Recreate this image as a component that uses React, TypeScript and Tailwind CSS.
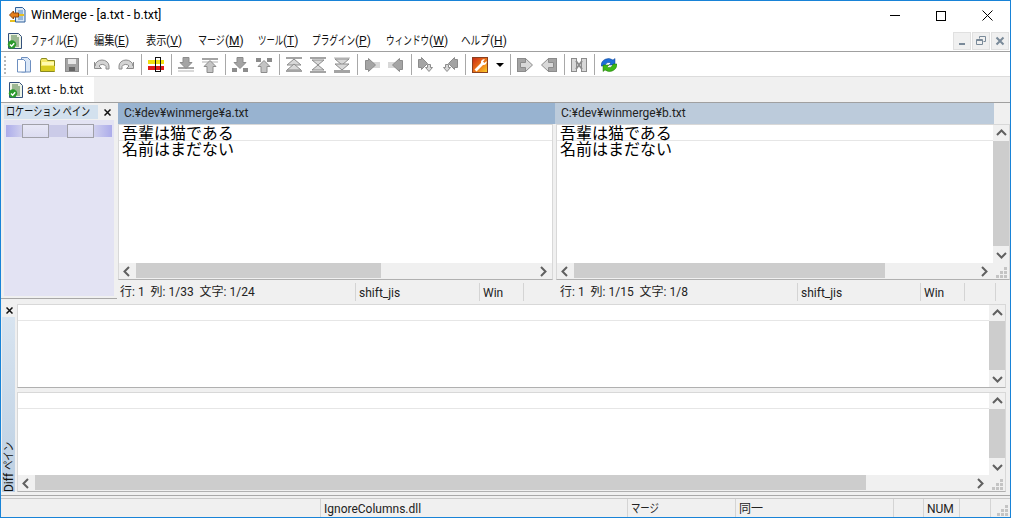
import type { ReactNode } from "react";

const UI = "font-['Roboto','Noto_Sans_CJK_JP',sans-serif]";

function Ico({ children, w = 16, h = 16 }: { children: ReactNode; w?: number; h?: number }) {
  return (
    <svg width={w} height={h} viewBox={`0 0 ${w} ${h}`} className="block shrink-0">
      {children}
    </svg>
  );
}

const G = "#a4a4a4";
const D = "#8c8c8c";
const L = "#d8d8d8";

function DocCheck() {
  return (
    <Ico>
      <path d="M1.500 .5h10l3 3v12h-13z" fill="#eef4e6" stroke="#34507c" />
      <path d="M4 3h6M4 5h8M4 7h8M8 9h4M9 11h3M9 13h3" stroke="#4a7a40" />
      <circle cx="5" cy="11.500" r="4.200" fill="#2a9a2c" />
      <path d="M3 11.500l1.600 1.700 2.600-3" fill="none" stroke="#fff" strokeWidth="1.400" />
    </Ico>
  );
}

function AppIcon() {
  return (
    <Ico w={17} h={17}>
      <path d="M6.500 .5h7l2.500 2.500v12h-9.500z" fill="#dce9f6" stroke="#2f5f9a" />
      <path d="M9 4h5M9 6h5M9 10h5M9 12h5" stroke="#4f86c0" />
      <rect x="8" y="7" width="7" height="2" fill="#e8c020" />
      <path d="M.5 8l4-4v2h5v4h-5v2z" fill="#e8801c" stroke="#8f4a10" />
      <rect x="1" y="13" width="5" height="2" fill="#e8c020" />
    </Ico>
  );
}

// toolbar glyphs, all disabled grey except a few
const tools: Record<string, ReactNode> = {
  new: (
    <>
      <path d="M5.500 .5h6l3 3v11.500h-9z" fill="#dbe8f8" stroke="#6d8fc0" />
      <path d="M1.500 2.500h6l2 2v10.500h-8z" fill="#fff" stroke="#6d8fc0" />
    </>
  ),
  open: (
    <>
      <path d="M.5 3.500l1-2h5l1 2h7v11h-14z" fill="#f5e96a" stroke="#8a8a20" />
      <rect x="2" y="5" width="12" height="3" fill="#fffbb0" />
      <rect x="1" y="9" width="14" height="5" fill="#d8cc20" />
    </>
  ),
  save: (
    <>
      <rect x="1.500" y="1.500" width="13" height="13" fill={G} stroke={D} />
      <rect x="4" y="2" width="8" height="5" fill="#e8e8e8" />
      <rect x="5" y="10" width="6" height="4" fill="#666" />
    </>
  ),
  undo: <path d="M1 9a7 6 0 0 1 14 0v3h-3V9.500a4 3.500 0 0 0-7-.5l2.500 2.500H.5V5z" fill="#d4d4d4" stroke={D} />,
  redo: <path d="M15 9a7 6 0 0 0-14 0v3h3V9.500a4 3.500 0 0 1 7-.5l-2.500 2.500h7V5z" fill="#d4d4d4" stroke={D} />,
  bars: (
    <>
      <rect x="0" y="3" width="16" height="4" fill="#f0e010" />
      <rect x="0" y="9" width="16" height="4" fill="#e01818" />
      <rect x="7.500" y=".5" width="5" height="14" fill="none" stroke="#111" />
    </>
  ),
  next: (
    <>
      <rect x="0" y="10" width="16" height="2" fill={G} />
      <rect x="0" y="13" width="16" height="2" fill={L} />
      <path d="M5 .5h6v5h3l-6 6-6-6h3z" fill={G} stroke={D} />
    </>
  ),
  prev: (
    <>
      <rect x="0" y="1" width="16" height="2" fill={G} />
      <rect x="0" y="4" width="16" height="2" fill={L} />
      <path d="M5 15.500h6v-6h3l-6-6-6 6h3z" fill="#c4c4c4" stroke={D} />
    </>
  ),
  nextc: (
    <>
      <rect x="0" y="11" width="5" height="4" fill={D} />
      <rect x="11" y="11" width="5" height="4" fill={D} />
      <path d="M5 .5h6v5h3l-6 6-6-6h3z" fill={G} stroke={D} />
    </>
  ),
  prevc: (
    <>
      <rect x="0" y="1" width="5" height="4" fill={D} />
      <rect x="11" y="1" width="5" height="4" fill={D} />
      <path d="M5 15.500h6v-6h3l-6-6-6 6h3z" fill="#c4c4c4" stroke={D} />
    </>
  ),
  first: (
    <>
      <rect x="0" y="0" width="16" height="2" fill={G} />
      <path d="M8 2l7 6H1z" fill={L} stroke={D} />
      <path d="M8 7l7 6H1z" fill={L} stroke={D} />
      <rect x="0" y="13" width="16" height="2" fill={G} />
    </>
  ),
  cur: (
    <>
      <rect x="0" y="0" width="16" height="2" fill={G} />
      <path d="M2 3h12L8 8z" fill={L} stroke={D} />
      <path d="M2 13h12L8 8z" fill={L} stroke={D} />
      <rect x="0" y="14" width="16" height="2" fill={G} />
    </>
  ),
  last: (
    <>
      <rect x="0" y="0" width="16" height="2" fill={L} />
      <path d="M8 8l7-6H1z" fill={L} stroke={D} />
      <path d="M8 13l7-6H1z" fill={L} stroke={D} />
      <rect x="0" y="13" width="16" height="3" fill={G} />
    </>
  ),
  right: (
    <>
      <rect x="9" y="5" width="7" height="6" fill={L} />
      <path d="M1.500 3.500h3v-2l7 6.500-7 6.500v-2h-3z" fill={G} stroke={D} />
    </>
  ),
  left: (
    <>
      <rect x="0" y="5" width="7" height="6" fill={L} />
      <path d="M14.500 3.500h-3v-2l-7 6.500 7 6.500v-2h3z" fill={G} stroke={D} />
    </>
  ),
  rightd: (
    <>
      <path d="M.5 2.500h3v-2l6 6-6 6v-2h-3z" fill={G} stroke={D} />
      <path d="M9.500 7.500h3v3h2l-3.500 4-3.500-4h2z" fill={L} stroke={D} />
    </>
  ),
  leftd: (
    <>
      <path d="M15.500 2.500h-3v-2l-6 6 6 6v-2h3z" fill={G} stroke={D} />
      <path d="M3.500 7.500h3v3h2l-3.500 4-3.500-4h2z" fill={L} stroke={D} />
    </>
  ),
  wrench: (
    <>
      <defs>
        <linearGradient id="wr" x1="0" y1="0" x2="1" y2="1">
          <stop offset="0" stopColor="#c82818" />
          <stop offset="0.6" stopColor="#f08018" />
          <stop offset="1" stopColor="#f8d830" />
        </linearGradient>
      </defs>
      <rect x=".5" y=".5" width="15" height="15" fill="url(#wr)" stroke="#8a4020" />
      <path d="M2.500 12.500l6.500-6.500a3 3 0 0 1 4-3.500l-2 2 1.500 1.500 2-2a3 3 0 0 1-3.500 4l-6.500 6.500z" fill="#fff" />
    </>
  ),
  boxr: (
    <>
      <rect x=".5" y="1.500" width="8" height="13" fill={G} stroke={D} />
      <path d="M3.500 5.500h5v-4l7 6.500-7 6.500v-4h-5z" fill={L} stroke={D} />
    </>
  ),
  boxl: (
    <>
      <rect x="7.500" y="1.500" width="8" height="13" fill={G} stroke={D} />
      <path d="M12.500 5.500h-5v-4l-7 6.500 7 6.500v-4h5z" fill={L} stroke={D} />
    </>
  ),
  merge: (
    <>
      <rect x=".5" y="1.500" width="5" height="13" fill={L} stroke={D} />
      <rect x="10.500" y="1.500" width="5" height="13" fill={L} stroke={D} />
      <path d="M5 4l3 4-3 4M11 4L8 8l3 4" fill="none" stroke={D} strokeWidth="2" />
    </>
  ),
  refresh: (
    <>
      <path d="M0 9a7.500 7.500 0 0 1 12-6l2-1.500V8H8l2-2a4 4 0 0 0-6 3z" fill="#1c6ed8" stroke="#0c3f90" strokeWidth=".5" />
      <path d="M16 7a7.500 7.500 0 0 1-12 6l-2 1.500V8h6l-2 2a4 4 0 0 0 6-3z" fill="#3cb818" stroke="#1c7008" strokeWidth=".5" />
    </>
  ),
};

function Btn({ name }: { name: string }) {
  return (
    <div className="w-[24px] h-full flex items-center justify-center">
      <Ico>{tools[name]}</Ico>
    </div>
  );
}

function Sep() {
  return (
    <div className="w-[6px] h-full flex items-center justify-center">
      <div className="w-px h-[21px] bg-[#a8a8a8]" />
    </div>
  );
}

function Chevron({ dir }: { dir: "up" | "down" | "left" | "right" }) {
  const d = {
    up: "M1 7l4.500-4.500L10 7",
    down: "M1 3l4.500 4.500L10 3",
    left: "M7 1L2.500 5.500 7 10",
    right: "M3 1l4.500 4.500L3 10",
  }[dir];
  return (
    <svg width="11" height="11" viewBox="0 0 11 11" className="block">
      <path d={d} fill="none" stroke="#606060" strokeWidth="2" />
    </svg>
  );
}

function HScroll({ thumb }: { thumb: string }) {
  return (
    <div className="h-[16px] flex bg-[#f0f0f0]">
      <div className="w-[17px] flex items-center justify-center shrink-0">
        <Chevron dir="left" />
      </div>
      <div className={`${thumb} h-[15px] bg-[#cdcdcd] shrink-0`} />
      <div className="flex-1" />
      <div className="w-[17px] flex items-center justify-center shrink-0">
        <Chevron dir="right" />
      </div>
    </div>
  );
}

function VScroll({ thumb }: { thumb: string }) {
  return (
    <div className="w-[16px] shrink-0 flex flex-col bg-[#f0f0f0]">
      <div className="h-[16px] flex items-center justify-center shrink-0">
        <Chevron dir="up" />
      </div>
      <div className={`${thumb} bg-[#cdcdcd] shrink-0`} />
      <div className="flex-1" />
      <div className="h-[16px] flex items-center justify-center shrink-0">
        <Chevron dir="down" />
      </div>
    </div>
  );
}

function Grip() {
  return (
    <svg width="16" height="16" viewBox="0 0 16 16" className="block shrink-0">
      <path d="M11 4h3v3h-3zM7 8h3v3H7zM11 8h3v3h-3zM3 12h3v3H3zM7 12h3v3H7zM11 12h3v3h-3z" fill="#c4c4c4" />
    </svg>
  );
}

function EditLines({ lines }: { lines: string[] }) {
  return (
    <div className="flex-1 min-w-0 bg-white font-['Noto_Sans_CJK_JP','Noto_Sans',sans-serif] text-[16px] text-black">
      <div className="h-[16px] leading-[14px] pl-[3px] border-b border-[#e6e6e6] whitespace-nowrap">{lines[0]}</div>
      <div className="h-[16px] leading-[14px] pl-[3px] whitespace-nowrap">{lines[1]}</div>
    </div>
  );
}

function StatusCell({ w, text }: { w: string; text: ReactNode }) {
  return (
    <div className={`${w} h-[18px] pl-[3px] border-l border-[#d4d4d4] leading-[20px] whitespace-nowrap shrink-0`}>{text}</div>
  );
}

function FilePane({
  width,
  title,
  titleBg,
  lines,
  hThumb,
  vbar,
  status,
  statusW,
  encW,
  winW,
  bodyGap,
}: {
  width: string;
  title: string;
  titleBg: string;
  lines: string[];
  hThumb: string;
  vbar?: boolean;
  status: string;
  statusW: string;
  encW: string;
  winW: string;
  bodyGap: string;
}) {
  return (
    <div className={`${width} flex flex-col shrink-0`}>
      <div className={`${titleBg} h-[21px] pl-[6px] leading-[21px] text-[12px] text-[#222] whitespace-nowrap`}>{title}</div>
      <div className={`${bodyGap} h-[156px] border border-[#d8d8d8] border-b-[#b0b0b0] flex flex-col`}>
        <div className="flex-1 min-h-0 flex">
          <EditLines lines={lines} />
          {vbar && <VScroll thumb="h-[105px]" />}
        </div>
        <div className="flex">
          <div className="flex-1 min-w-0">
            <HScroll thumb={hThumb} />
          </div>
          {vbar && <Grip />}
        </div>
      </div>
      <div className="h-[23px] flex items-center text-[12px] text-[#222] pt-[1px]">
        <div className={`${statusW} shrink-0 whitespace-pre leading-[20px]`}>{status}</div>
        <StatusCell w={encW} text="shift_jis" />
        <StatusCell w={winW} text="Win" />
        {vbar && <StatusCell w="w-[31px]" text="" />}
        <div className="flex-1 h-[18px] border-l border-[#d4d4d4]" />
      </div>
    </div>
  );
}

const MENU: { label: string; nw: string; sx: string; key: string; w: string }[] = [
  { label: "ファイル", nw: "w-[32px]", sx: "scale-x-[0.68]", key: "F", w: "w-[63px]" },
  { label: "編集", nw: "w-[20px]", sx: "scale-x-[0.85]", key: "E", w: "w-[52px]" },
  { label: "表示", nw: "w-[20px]", sx: "scale-x-[0.85]", key: "V", w: "w-[52px]" },
  { label: "マージ", nw: "w-[27px]", sx: "scale-x-[0.75]", key: "M", w: "w-[60px]" },
  { label: "ツール", nw: "w-[25px]", sx: "scale-x-[0.7]", key: "T", w: "w-[54px]" },
  { label: "プラグイン", nw: "w-[43px]", sx: "scale-x-[0.72]", key: "P", w: "w-[74px]" },
  { label: "ウィンドウ", nw: "w-[43px]", sx: "scale-x-[0.72]", key: "W", w: "w-[75px]" },
  { label: "ヘルプ", nw: "w-[29px]", sx: "scale-x-[0.8]", key: "H", w: "w-[60px]" },
];

export default function App() {
  return (
    <div className={`${UI} w-[1011px] h-[518px] overflow-hidden border border-[#1883d7] bg-[#f0f0f0] text-[12px] text-[#111] flex flex-col`}>
      {/* title bar */}
      <div className="h-[29px] shrink-0 bg-white flex items-center">
        <div className="ml-[8px]">
          <AppIcon />
        </div>
        <div className="ml-[5px] text-[12.4px] text-black">WinMerge - [a.txt - b.txt]</div>
        <div className="flex-1" />
        <div className="w-[46px] h-full flex items-center justify-center">
          <div className="w-[10px] h-px bg-black" />
        </div>
        <div className="w-[46px] h-full flex items-center justify-center">
          <div className="w-[10px] h-[10px] border border-black" />
        </div>
        <div className="w-[46px] h-full flex items-center justify-center">
          <svg width="11" height="11" viewBox="0 0 11 11" className="block">
            <path d="M.5 .5l10 10M10.500 .5l-10 10" stroke="#000" fill="none" />
          </svg>
        </div>
      </div>

      {/* menu */}
      <div className="h-[21px] shrink-0 bg-white flex items-center border-b border-[#a0a0a0] box-content">
        <div className="ml-[6px] mr-[8px]">
          <DocCheck />
        </div>
        {MENU.map((m) => (
          <div key={m.key} className={`${m.w} shrink-0 whitespace-nowrap text-[12px]`}>
            <span className={`${m.nw} ${m.sx} inline-block origin-left`}>{m.label}</span>(
            <span className="underline">{m.key}</span>)
          </div>
        ))}
        <div className="flex-1" />
        <div className="flex gap-px mr-[1px]">
          {["min", "res", "cls"].map((b) => (
            <div key={b} className="w-[18px] h-[18px] border border-[#e0e0e0] bg-[#f0f0f0] flex items-center justify-center">
              <svg width="10" height="10" viewBox="0 0 10 10" className="block">
                {b === "min" && <rect x="2" y="7" width="6" height="2" fill="#7a8a99" />}
                {b === "res" && <path d="M3.500 2.500v-2h6v5h-2M.5 3.500h6v5h-6z M.5 4.500h6" fill="none" stroke="#7a8a99" />}
                {b === "cls" && <path d="M1.500 1.500l7 7M8.500 1.500l-7 7" fill="none" stroke="#7a8a99" strokeWidth="2" />}
              </svg>
            </div>
          ))}
        </div>
      </div>

      {/* toolbar */}
      <div className="h-[25px] shrink-0 bg-white border-b border-[#dcdcdc] flex items-center pt-[1px]">
        <div className="w-[5px] ml-[2px] mr-[4px] h-[20px] shrink-0 bg-[radial-gradient(#b8b8b8_1px,transparent_1px)] bg-[length:4px_4px]" />
        <Btn name="new" />
        <Btn name="open" />
        <Btn name="save" />
        <Sep />
        <Btn name="undo" />
        <Btn name="redo" />
        <Sep />
        <Btn name="bars" />
        <Sep />
        <Btn name="next" />
        <Btn name="prev" />
        <Sep />
        <Btn name="nextc" />
        <Btn name="prevc" />
        <Sep />
        <Btn name="first" />
        <Btn name="cur" />
        <Btn name="last" />
        <Sep />
        <Btn name="right" />
        <Btn name="left" />
        <Sep />
        <Btn name="rightd" />
        <Btn name="leftd" />
        <Sep />
        <Btn name="wrench" />
        <div className="w-[15px] h-full flex items-center justify-center">
          <div className="border-x-[4px] border-x-transparent border-t-[4px] border-t-black" />
        </div>
        <Sep />
        <Btn name="boxr" />
        <Btn name="boxl" />
        <Sep />
        <Btn name="merge" />
        <Sep />
        <Btn name="refresh" />
      </div>

      {/* tabs */}
      <div className="h-[26px] shrink-0 flex border-b border-[#a0a0a0]">
        <div className="w-[93px] bg-white flex items-center pl-[7px] gap-[3px] whitespace-nowrap text-[12px]">
          <DocCheck />
          <span>a.txt - b.txt</span>
        </div>
      </div>

      {/* files + location pane */}
      <div className="h-[201px] shrink-0 flex">
        <div className="w-[116px] shrink-0 h-[196px] border-b border-[#a8a8a8] flex flex-col">
          <div className="h-[16px] mt-[1px] flex items-center shrink-0">
            <div className="ml-[3px] w-[94px] h-[14px] bg-[#d3e1ee] leading-[14px] pl-[2px] whitespace-nowrap text-[12px]">
              <span className="inline-block w-[86px] origin-left scale-x-[0.76]">ロケーション ペイン</span>
            </div>
            <svg width="7" height="7" viewBox="0 0 7 7" className="block ml-[6px]">
              <path d="M.5 .5l6 6M6.500 .5l-6 6" stroke="#111" strokeWidth="1.500" fill="none" />
            </svg>
          </div>
          <div className="mx-[3px] h-[176px] bg-[#e3e3f3] pt-[5px] px-[2px]">
            <div className="h-[12px] flex">
              <div className="w-[16px] bg-gradient-to-r from-[#acacea] to-[#d0d0ee]" />
              <div className="w-[27px] h-[14px] -mt-[1px] bg-gradient-to-b from-[#e8e8f6] to-[#dcdcf0] border border-[#a0a0a8]" />
              <div className="w-[18px] bg-[#cbcbe8]" />
              <div className="w-[27px] h-[14px] -mt-[1px] bg-gradient-to-b from-[#e8e8f6] to-[#dcdcf0] border border-[#a0a0a8]" />
              <div className="w-[18px] bg-gradient-to-r from-[#d0d0ee] to-[#acacea]" />
            </div>
          </div>
        </div>
        <div className="w-[1px] shrink-0" />
        <FilePane
          width="w-[437px]"
          title="C:¥dev¥winmerge¥a.txt"
          titleBg="bg-[#98b3d0]"
          lines={["吾輩は猫である", "名前はまだない"]}
          hThumb="w-[245px]"
          status="行: 1  列: 1/33  文字: 1/24"
          statusW="w-[237px] pl-[2px]"
          encW="w-[124px]"
          winW="w-[44px]"
          bodyGap="mr-[2px]"
        />
        <div className="flex-1 min-w-0 flex">
          <FilePane
            width="w-[455px]"
            title="C:¥dev¥winmerge¥b.txt"
            titleBg="bg-[#bccbdb] mr-[16px]"
            lines={["吾輩は猫である", "名前はまだない"]}
            hThumb="w-[311px]"
            vbar
            status="行: 1  列: 1/15  文字: 1/8"
            statusW="w-[242px] pl-[5px]"
            encW="w-[123px]"
            winW="w-[44px]"
            bodyGap="ml-[1px]"
          />
        </div>
      </div>

      {/* diff pane */}
      <div className="h-[192px] shrink-0 flex border-b border-[#a8a8a8]">
        <div className="w-[15px] shrink-0 flex flex-col pl-[1px]">
          <div className="h-[13px] flex items-center justify-center shrink-0">
            <svg width="7" height="7" viewBox="0 0 7 7" className="block">
              <path d="M.5 .5l6 6M6.500 .5l-6 6" stroke="#111" strokeWidth="1.500" fill="none" />
            </svg>
          </div>
          <div className="h-[175px] mr-[1px] bg-gradient-to-b from-[#d8e4f0] to-[#bccfe2] flex flex-col justify-end items-center overflow-hidden">
            <div className="h-[52px] w-[14px] flex items-center justify-center">
              <div className="w-[52px] h-[14px] shrink-0 -rotate-90 leading-[14px] whitespace-nowrap text-[12px]">
                Diff <span className="inline-block w-[28px] origin-left scale-x-[0.78]">ペイン</span>
              </div>
            </div>
          </div>
        </div>
        <div className="flex-1 min-w-0 flex flex-col pr-[4px] pl-[1px]">
          <div className="h-[84px] shrink-0 border border-[#d8d8d8] border-b-[#b0b0b0] flex">
            <div className="flex-1 bg-white">
              <div className="h-[16px] border-b border-[#e6e6e6]" />
            </div>
            <VScroll thumb="h-[49px]" />
          </div>
          <div className="h-[4px] shrink-0" />
          <div className="h-[100px] shrink-0 border border-[#d8d8d8] border-b-[#b0b0b0] flex flex-col">
            <div className="flex-1 min-h-0 flex">
              <div className="flex-1 bg-white">
                <div className="h-[16px] border-b border-[#e6e6e6]" />
              </div>
              <VScroll thumb="h-[49px]" />
            </div>
            <div className="flex">
              <div className="flex-1 min-w-0">
                <HScroll thumb="w-[831px]" />
              </div>
              <Grip />
            </div>
          </div>
        </div>
      </div>

      {/* status bar */}
      <div className="flex-1 min-h-0 mt-[2px] border-t border-[#c8c8c8] flex items-center text-[12px] text-[#222]">
        <div className="w-[319px] shrink-0" />
        <StatusCell w="w-[307px]" text="IgnoreColumns.dll" />
        <StatusCell
          w="w-[108px]"
          text={<span className="inline-block w-[28px] origin-left scale-x-[0.78]">マージ</span>}
        />
        <StatusCell w="w-[158px]" text="同一" />
        <StatusCell w="w-[30px]" text="" />
        <StatusCell w="w-[36px]" text="NUM" />
        <StatusCell w="w-[31px]" text="" />
        <div className="flex-1 h-[18px] border-l border-[#d4d4d4] flex justify-end items-end">
          <Grip />
        </div>
      </div>
    </div>
  );
}
